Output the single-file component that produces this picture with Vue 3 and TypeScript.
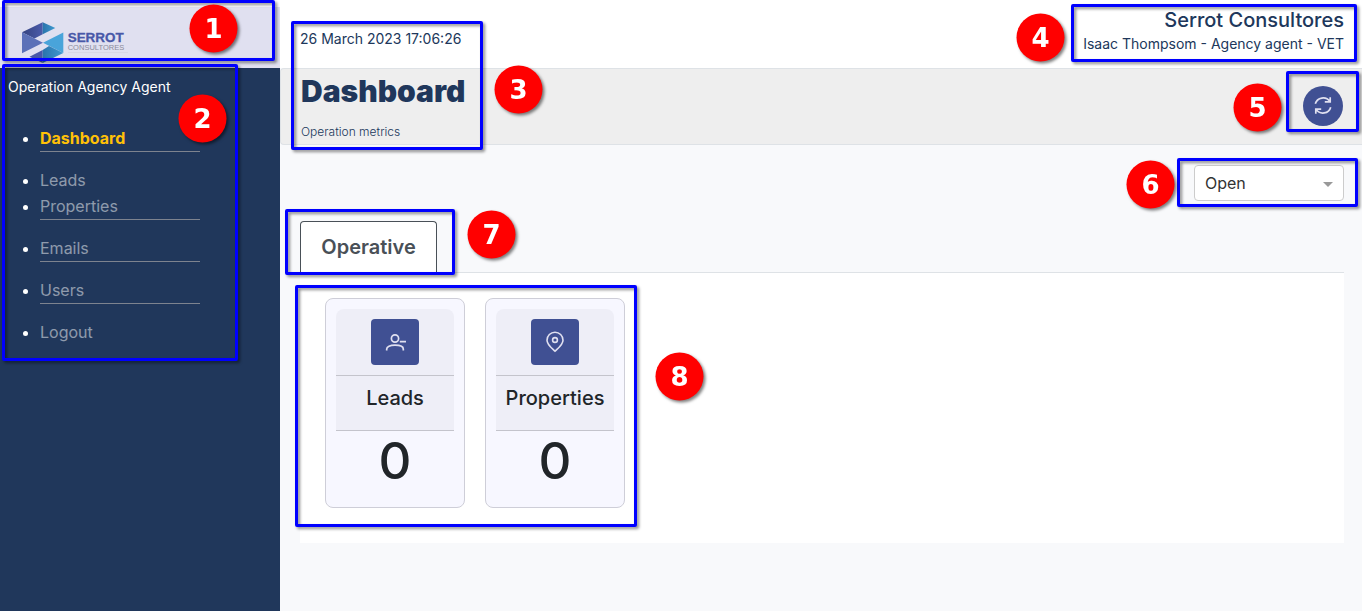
<script setup lang="ts">
interface MenuItem { label: string; active?: boolean; divider?: boolean }
interface Metric { label: string; value: number; icon: 'user' | 'pin' }
interface Callout { n: number; x: number; y: number; w: number; h: number; cx: number; cy: number }

const menu: MenuItem[] = [
  { label: 'Dashboard', active: true, divider: true },
  { label: 'Leads' },
  { label: 'Properties', divider: true },
  { label: 'Emails', divider: true },
  { label: 'Users', divider: true },
  { label: 'Logout' },
]

const metrics: Metric[] = [
  { label: 'Leads', value: 0, icon: 'user' },
  { label: 'Properties', value: 0, icon: 'pin' },
]

const callouts: Callout[] = [
  { n: 1, x: 2, y: 0, w: 273, h: 61, cx: 213.5, cy: 28.5 },
  { n: 2, x: 2, y: 64, w: 236, h: 297, cx: 202.5, cy: 118.5 },
  { n: 3, x: 291, y: 21, w: 192, h: 129, cx: 518.5, cy: 89.5 },
  { n: 4, x: 1071, y: 4, w: 286, h: 58, cx: 1040.5, cy: 37.5 },
  { n: 5, x: 1286, y: 71, w: 73, h: 61, cx: 1257.5, cy: 107.5 },
  { n: 6, x: 1177, y: 158, w: 181, h: 49, cx: 1150.5, cy: 184.5 },
  { n: 7, x: 285, y: 209, w: 170, h: 66, cx: 491.5, cy: 234.5 },
  { n: 8, x: 295, y: 285, w: 342, h: 242, cx: 679.5, cy: 376.5 },
]
</script>

<template>
  <div class="app">
    <aside class="sidebar">
      <div class="brand">
        <svg class="logo" width="120" height="50" viewBox="0 0 120 50">
          <defs>
            <linearGradient id="fold" x1="0" x2="1"><stop offset="0" stop-color="#34427f" /><stop offset="1" stop-color="#4b5bab" /></linearGradient>
            <linearGradient id="edge" x1="0" x2="1"><stop offset="0" stop-color="#2a74ac" /><stop offset="1" stop-color="#3f9ad0" /></linearGradient>
          </defs>
          <polygon points="4,17.300 24.700,7.300 24.700,19.300 16.500,23.500" fill="url(#fold)" />
          <polygon points="24.700,7.300 37.300,13 24.700,19.300" fill="url(#edge)" />
          <polygon points="4,17.300 25,27.700 4,38.300" fill="#5c71b8" />
          <polygon points="45.300,17.500 45.300,38 25,27.700" fill="#49a4da" />
          <polygon points="11.500,41.700 24.700,35 24.700,48" fill="#4858a8" />
          <polygon points="24.700,35 31,31 45.300,38 24.700,48" fill="url(#edge)" />
          <text x="49.700" y="27" class="logo-name" textLength="56" lengthAdjust="spacingAndGlyphs">SERROT</text>
          <text x="49.700" y="35.300" class="logo-sub" textLength="56.500" lengthAdjust="spacingAndGlyphs">CONSULTORES</text>
          <path d="M50 37.500H110" stroke="#d3d3e1" stroke-width=".7" />
        </svg>
      </div>
      <div class="role">Operation Agency Agent</div>
      <ul class="menu">
        <li v-for="m in menu" :key="m.label" :class="{ active: m.active, divider: m.divider }">
          <a>{{ m.label }}</a>
        </li>
      </ul>
    </aside>

    <main class="main">
      <header class="top">
        <div class="date">26 March 2023 17:06:26</div>
        <div class="account">
          <div class="company">Serrot Consultores</div>
          <div class="user">Isaac Thompsom - Agency agent - VET</div>
        </div>
      </header>

      <section class="title-bar">
        <div>
          <h1>Dashboard</h1>
          <p>Operation metrics</p>
        </div>
        <button class="refresh" aria-label="Refresh">
          <svg width="20" height="20" viewBox="0 0 20 20" fill="none" stroke="#e0e0f0" stroke-width="1.700">
            <path d="M2.300 7.800A8 7.800 0 0 1 16.800 5.600M17.200 1.200V5.900H11.800M17.700 11.200A8 7.800 0 0 1 3.200 13.400M2.800 17.800V13.100H8.200" />
          </svg>
        </button>
      </section>

      <div class="filter">
        <div class="select"><span>Open</span><i class="caret"></i></div>
      </div>

      <div class="tabs"><div class="tab">Operative</div></div>
      <section class="panel">
        <article v-for="c in metrics" :key="c.label" class="card">
          <div class="card-icon">
            <span class="tile">
              <svg v-if="c.icon === 'user'" width="24" height="24" viewBox="0 0 24 24" fill="none" stroke="#e0e0f0" stroke-width="1.700">
                <circle cx="12" cy="8.500" r="3.600" />
                <path d="M3.700 20.500V19C3.700 16.500 7 15.200 12 15.200S20.300 16.500 20.300 19V20.500M16.800 11.700H23" />
              </svg>
              <svg v-else width="24" height="24" viewBox="0 0 24 24" fill="none" stroke="#e0e0f0" stroke-width="1.600">
                <path d="M12 21.200C9 18.300 4 14.700 4 10.200A8 8 0 0 1 20 10.200C20 14.700 15 18.300 12 21.200Z" />
                <circle cx="12" cy="10" r="2.400" />
              </svg>
            </span>
          </div>
          <div class="card-label">{{ c.label }}</div>
          <div class="card-value">{{ c.value }}</div>
        </article>
      </section>
    </main>

    <svg class="callouts" width="1362" height="611" viewBox="0 0 1362 611">
      <g v-for="c in callouts" :key="c.n">
        <rect class="frame" :x="c.x + 1.5" :y="c.y + 1.5" :width="c.w - 3" :height="c.h - 3" rx=".5" />
        <g class="marker">
          <circle :cx="c.cx" :cy="c.cy" r="24" />
          <text :x="c.cx" :y="c.cy + 9.2">{{ c.n }}</text>
        </g>
      </g>
    </svg>
  </div>
</template>

<style>
body { margin: 0; overflow: hidden; }
</style>

<style scoped>
* { box-sizing: border-box; }
.app {
  position: relative; display: flex; width: 1362px; height: 611px; overflow: hidden;
  background: #f8f9fb; font-family: Inter, "Liberation Sans", sans-serif; color: #212529;
}
.sidebar { width: 280px; background: #20375b; color: #fff; border-top: 7px solid #fcfcfe; }
.brand { height: 61px; background: #e0e0f0; padding: 8px 0 0 18px; }
.logo { display: block; }
.logo-name { font: 700 13.500px "Liberation Sans", sans-serif; fill: #4858a8; stroke: #4858a8; stroke-width: .3px; }
.logo-sub { font: 400 7.500px "Liberation Sans", sans-serif; fill: #8c8c9c; }
.role { font-size: 14px; line-height: 22px; padding: 8px 8px 0; }
.menu { margin: 27px 0 0; padding: 0 0 0 40px; width: 200px; font-size: 16px; line-height: 26px; }
.menu li { height: 26px; }
.menu li.divider { height: 42px; }
.menu li a { display: block; height: 26px; color: rgba(255, 255, 255, .5); }
.menu li.divider a { height: 27px; border-bottom: 1px solid #7d838f; }
.menu li.active a { color: #ffc107; font-weight: 700; }
.main { flex: 1; display: flex; flex-direction: column; }
.top { height: 68px; background: #fff; display: flex; justify-content: space-between; padding: 0 18px 0 20px; color: #20375b; }
.date { font-size: 14px; line-height: 22px; padding-top: 28px; }
.account { text-align: right; }
.company { font-size: 20px; font-weight: 500; line-height: 24px; padding-top: 8px; }
.user { font-size: 14px; line-height: 22px; padding-top: 1px; }
.title-bar {
  height: 77px; background: #eee; border: 1px solid #dee2e6; border-right: 0; border-radius: 4px 0 0 4px;
  display: flex; justify-content: space-between; padding: 0 19px 0 20px; color: #20375b;
}
h1 { margin: 4px 0 0; font-size: 30px; line-height: 36px; font-weight: 900; }
p { margin: 13px 0 0; font-size: 12px; line-height: 20px; font-weight: 300; color: #20375b; }
.refresh { width: 40px; height: 40px; margin-top: 17px; padding: 0; border: 0; border-radius: 50%; background: #405093; display: grid; place-items: center; }
.filter { display: flex; justify-content: flex-end; padding: 20px 18px 20px 0; }
.select { width: 150px; height: 36px; border: 1px solid #ccc; border-radius: 4px; background: #fff; display: flex; align-items: center; justify-content: space-between; padding: 0 10px; font-size: 16px; color: #333; }
.caret { border: 5px solid transparent; border-top-color: #999; border-bottom: 0; margin-top: 2px; }
.tabs { height: 52px; margin: 0 18px 0 20px; border-bottom: 1px solid #dee2e6; display: flex; }
.tab { width: 137px; height: 52px; border: 1px solid #495057; border-bottom: 0; border-radius: 4px 4px 0 0; background: #fff; text-align: center; font-size: 20px; font-weight: 600; line-height: 51px; color: #495057; }
.panel { height: 270px; margin: 0 18px 0 20px; background: #fff; display: flex; gap: 20px; padding: 25px; align-items: flex-start; }
.card { width: 140px; height: 210px; border: 1px solid #ceced8; border-radius: 8px; background: #f7f7ff; padding: 10px; text-align: center; }
.card-icon { height: 67px; padding-top: 10px; background: #eeeef7; border-bottom: 1px solid #c4c4cc; border-radius: 8px 8px 0 0; }
.tile { display: grid; place-items: center; width: 48px; height: 46px; margin: 0 auto; border-radius: 4px; background: #405093; }
.tile svg { width: 24px; height: 24px; }
.card-label { height: 55px; background: #eeeef7; border-bottom: 1px solid #c4c4cc; font-size: 20px; font-weight: 500; line-height: 45px; margin: 0; }
.card-value { font-size: 51px; line-height: 60px; font-weight: 500; }
.callouts { position: absolute; left: 0; top: 0; pointer-events: none; }
.frame { fill: none; stroke: #00f; stroke-width: 3; filter: drop-shadow(2px 2px 1.500px rgba(0, 0, 0, .45)); }
.marker { filter: drop-shadow(2px 2px 1.500px rgba(0, 0, 0, .5)); }
.marker circle { fill: red; }
.marker text { font: 700 26px "DejaVu Sans", sans-serif; fill: #fff; text-anchor: middle; }
</style>
